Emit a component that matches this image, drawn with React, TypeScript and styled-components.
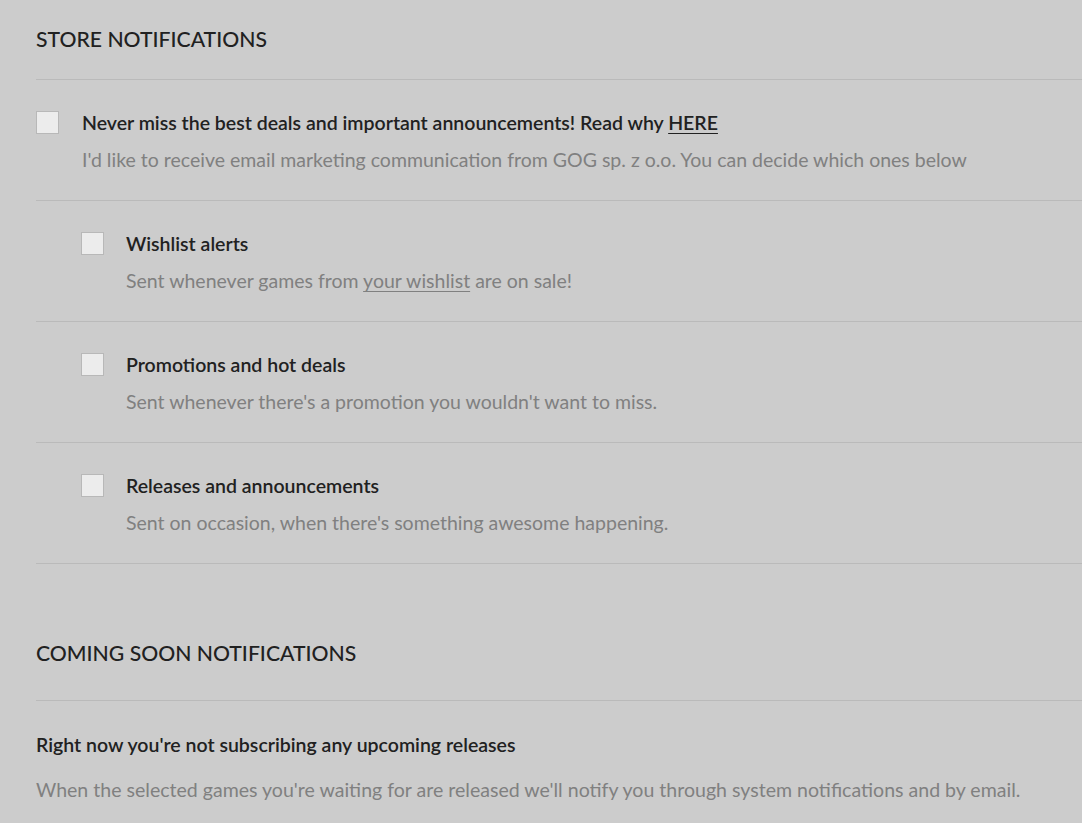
import React from "react";
import styled, { createGlobalStyle } from "styled-components";

const Global = createGlobalStyle`
  html, body {
    margin: 0;
    padding: 0;
    background: #cccccc;
  }
  body {
    font-family: Lato, "Noto Sans", "Liberation Sans", sans-serif;
    color: #212121;
    -webkit-font-smoothing: antialiased;
  }
`;

const Page = styled.div`
  min-height: 823px;
  padding-left: 36px;
  overflow: hidden;
  background: #cccccc;
`;

const Section = styled.section<{ $gap?: number }>`
  margin-top: ${(p) => p.$gap ?? 0}px;
`;

const SectionTitle = styled.h2<{ $bottom: number }>`
  margin: 0;
  padding: 26px 0 ${(p) => p.$bottom}px;
  font-size: 21.2px;
  line-height: 26px;
  font-weight: 500;
  text-transform: uppercase;
  color: #212121;
  border-bottom: 1px solid #bababa;
`;

const OptionRow = styled.div<{ $indent?: boolean }>`
  display: flex;
  align-items: flex-start;
  gap: ${(p) => (p.$indent ? 22 : 23)}px;
  padding: 31px 0 28px ${(p) => (p.$indent ? 45 : 0)}px;
  border-bottom: 1px solid #bababa;
`;

const Checkbox = styled.span`
  flex: none;
  box-sizing: border-box;
  width: 23px;
  height: 23px;
  background: #ececec;
  border: 1px solid #b8b8b8;
`;

const OptionText = styled.div`
  display: flex;
  flex-direction: column;
  gap: 13px;
`;

const Label = styled.div`
  font-size: 19.5px;
  line-height: 24px;
  font-weight: 600;
  color: #212121;
  white-space: nowrap;
`;

const Description = styled.div`
  font-size: 19.5px;
  line-height: 24px;
  font-weight: 400;
  color: #808080;
  white-space: nowrap;
`;

const DarkLink = styled.a`
  color: #212121;
  text-decoration: underline;
  text-underline-offset: 3px;
  text-decoration-thickness: 1px;
`;

const GreyLink = styled.a`
  color: #808080;
  text-decoration: underline;
  text-underline-offset: 3px;
  text-decoration-thickness: 1px;
`;

const Empty = styled.div`
  padding-top: 32px;
  display: flex;
  flex-direction: column;
  gap: 21px;
`;

const EmptyTitle = styled.div`
  font-size: 19.5px;
  line-height: 24px;
  font-weight: 600;
  color: #212121;
  white-space: nowrap;
`;

const EmptyText = styled.div`
  font-size: 19.56px;
  line-height: 24px;
  color: #808080;
  white-space: nowrap;
`;

const subOptions = [
  {
    label: "Wishlist alerts",
    desc: (
      <>
        Sent whenever games from <GreyLink>your wishlist</GreyLink> are on sale!
      </>
    ),
  },
  {
    label: "Promotions and hot deals",
    desc: <>Sent whenever there's a promotion you wouldn't want to miss.</>,
  },
  {
    label: "Releases and announcements",
    desc: <>Sent on occasion, when there's something awesome happening.</>,
  },
];

export default function App() {
  return (
    <>
      <Global />
      <Page>
        <Section>
          <SectionTitle $bottom={27}>Store notifications</SectionTitle>
          <OptionRow>
            <Checkbox />
            <OptionText>
              <Label>
                Never miss the best deals and important announcements! Read why{" "}
                <DarkLink>HERE</DarkLink>
              </Label>
              <Description>
                I'd like to receive email marketing communication from GOG sp. z o.o. You can decide which ones below
              </Description>
            </OptionText>
          </OptionRow>
          {subOptions.map((o) => (
            <OptionRow $indent key={o.label}>
              <Checkbox />
              <OptionText>
                <Label>{o.label}</Label>
                <Description>{o.desc}</Description>
              </OptionText>
            </OptionRow>
          ))}
        </Section>
        <Section $gap={50}>
          <SectionTitle $bottom={34}>Coming soon notifications</SectionTitle>
          <Empty>
            <EmptyTitle>Right now you're not subscribing any upcoming releases</EmptyTitle>
            <EmptyText>
              When the selected games you're waiting for are released we'll notify you through system notifications and by email.
            </EmptyText>
          </Empty>
        </Section>
      </Page>
    </>
  );
}
